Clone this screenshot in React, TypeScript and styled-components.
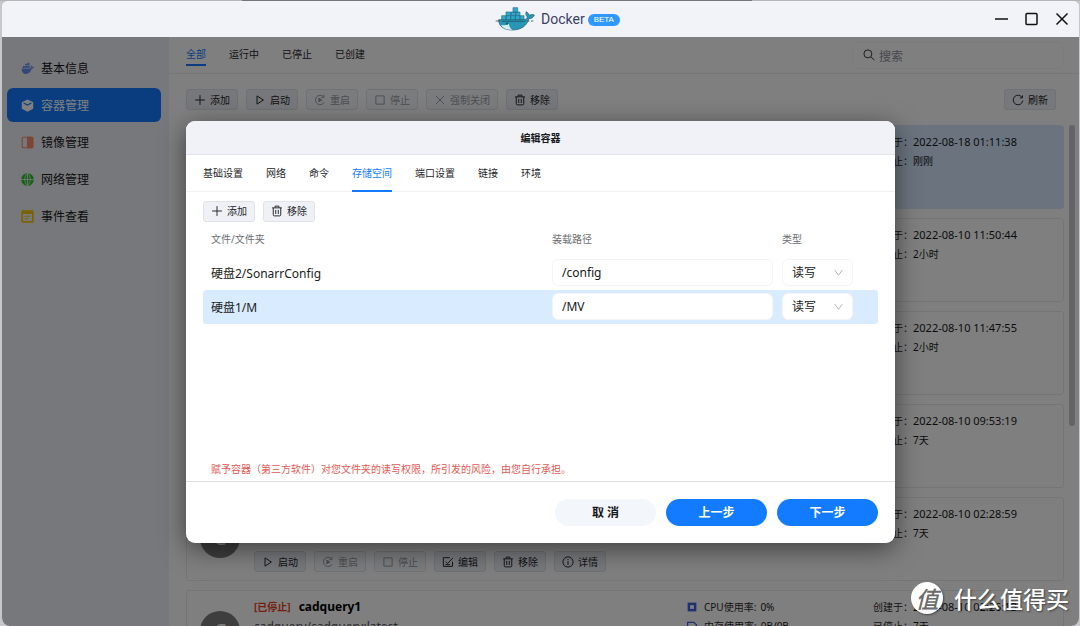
import React from "react";
import styled, { createGlobalStyle, css } from "styled-components";

const GlobalStyle = createGlobalStyle`
  * { box-sizing: border-box; }
  html, body { margin: 0; padding: 0; }
  body {
    background: linear-gradient(90deg, #b4b4b7 0 242px, #77757a 242px 752px, #b4b4b7 752px) top / 100% 1px no-repeat, #c6c7ca;
    font-family: "Noto Sans", "Noto Sans CJK SC", sans-serif;
    font-size: 10px;
    color: #1c1d20;
    overflow: hidden;
  }
  button, input, select { font: inherit; color: inherit; margin: 0; }
  button { cursor: pointer; }
`;

/* ---------- window ---------- */

const Window = styled.div`
  position: relative;
  display: flex;
  flex-direction: column;
  height: calc(100vh - 1px);
  margin: 1px 1px 0 2px;
  border-radius: 6px 6px 8px 8px;
  overflow: hidden;
  background: #fff;
`;

const TitleBar = styled.header`
  display: grid;
  grid-template-columns: 1fr auto 1fr;
  align-items: center;
  flex: none;
  height: 36px;
  background: #f2f3f9;
`;

const Brand = styled.div`
  grid-column: 2;
  display: flex;
  align-items: center;
  margin-left: 34px;
`;

const BrandName = styled.span`
  margin-left: 6px;
  font: 14px/18px Roboto, sans-serif;
  color: #3b3f63;
`;

const Badge = styled.span`
  margin: 2px 0 0 3px;
  padding: 0 6px;
  border-radius: 6px;
  background: #2f98fd;
  color: #fff;
  font: 8px/12px "Liberation Sans", sans-serif;
`;

const WindowControls = styled.div`
  display: flex;
  justify-content: flex-end;
  gap: 14px;
  padding-right: 9px;
`;

const WindowButton = styled.button`
  display: grid;
  place-items: center;
  width: 16px;
  height: 16px;
  padding: 0;
  border: 0;
  background: none;
`;

const Body = styled.div`
  position: relative;
  display: flex;
  flex: 1;
  min-height: 0;
`;

/* ---------- sidebar ---------- */

const Sidebar = styled.nav`
  display: flex;
  flex-direction: column;
  gap: 3px;
  flex: none;
  width: 167px;
  padding: 14px 8px 14px 5px;
  background: #eff1f6;
`;

const NavItem = styled.a<{ $active?: boolean }>`
  display: flex;
  align-items: center;
  gap: 7px;
  height: 34px;
  padding-left: 14px;
  border-radius: 6px;
  font-size: 12px;
  text-decoration: none;
  color: ${(p) => (p.$active ? "#fff" : "#17181b")};
  background: ${(p) => (p.$active ? "#137bff" : "transparent")};
  svg { width: 13px; height: 13px; }
`;

/* ---------- main area ---------- */

const Main = styled.main`
  display: flex;
  flex-direction: column;
  flex: 1;
  min-width: 0;
`;

const FilterBar = styled.div`
  display: flex;
  flex: none;
  height: 37px;
  padding: 0 15px 0 17px;
  border-bottom: 1px solid #eceef1;
`;

const TabList = styled.div<{ $modal?: boolean }>`
  display: flex;
  gap: 23px;
  flex: ${(p) => (p.$modal ? "none" : "1")};
  ${(p) =>
    p.$modal &&
    css`
      height: 37px;
      padding: 0 17px;
      border-bottom: 1px solid #eeeff2;
    `}
`;

const Tab = styled.button<{ $active?: boolean; $modal?: boolean }>`
  height: ${(p) => (p.$modal ? "37px" : "29px")};
  padding: ${(p) => (p.$modal ? "0" : "6px 0 0")};
  border: 0;
  border-bottom: 2px solid ${(p) => (p.$active ? "#137bff" : "transparent")};
  background: none;
  color: ${(p) => (p.$active ? "#137bff" : "#26272b")};
`;

const SearchBox = styled.label`
  display: flex;
  align-items: center;
  gap: 4px;
  align-self: center;
  width: 212px;
  height: 27px;
  padding: 0 10px;
  border: 1px solid #f6f7fa;
  border-radius: 6px;
  color: #33343a;
  svg { width: 12px; height: 12px; flex: none; }
`;

const SearchInput = styled.input`
  flex: 1;
  min-width: 0;
  padding: 2px 0 0;
  border: 0;
  outline: 0;
  background: none;
  font-size: 12px;
  &::placeholder { color: #8e8f9d; opacity: 1; }
`;

const Toolbar = styled.div<{ $main?: boolean }>`
  display: flex;
  gap: 8px;
  flex: none;
  padding: ${(p) => (p.$main ? "15px 23px 15px 17px" : "0")};
  & > :last-child { margin-left: ${(p) => (p.$main ? "auto" : "0")}; }
`;

const ToolButton = styled.button`
  display: inline-flex;
  align-items: center;
  justify-content: center;
  gap: 4px;
  height: 21px;
  padding: 0 7px;
  border: 1px solid #dfe2e8;
  border-radius: 3px;
  background: #eff1f6;
  color: #26272b;
  line-height: 12px;
  white-space: nowrap;
  svg { width: 12px; height: 12px; }
  &:disabled {
    color: #9b9da6;
    background: #f7f8fb;
    border-color: #e2e5eb;
  }
`;

const ListArea = styled.div`
  display: flex;
  flex: 1;
  min-height: 0;
  gap: 5px;
  padding: 0 4px 0 17px;
`;

const CardList = styled.div`
  display: flex;
  flex-direction: column;
  gap: 9px;
  flex: 1;
  min-width: 0;
  overflow: hidden;
`;

const ScrollThumb = styled.div`
  flex: none;
  width: 6px;
  height: 60%;
  border-radius: 3px;
  background: #c6c7ca;
`;

const Card = styled.article<{ $selected?: boolean }>`
  display: grid;
  grid-template-columns: 40px minmax(0, 1fr) 172px 190px;
  column-gap: 14px;
  flex: none;
  height: 84px;
  padding: 6px 0 8px 13px;
  border: 1px solid ${(p) => (p.$selected ? "#d6e8fc" : "#eaebee")};
  border-radius: 3px;
  background: ${(p) => (p.$selected ? "#d6e8fc" : "#fff")};
`;

const Avatar = styled.div`
  align-self: center;
  display: grid;
  place-items: center;
  width: 40px;
  height: 40px;
  border-radius: 50%;
  background: #7d7d7f;
  color: #fff;
  font-size: 20px;
  line-height: 20px;
`;

const CardBody = styled.div`
  display: flex;
  flex-direction: column;
  grid-column: 2;
`;

const CardTitle = styled.h2`
  display: flex;
  gap: 8px;
  margin: 0;
  font-size: 12px;
  line-height: 20px;
  color: #000;
`;

const CardState = styled.span`
  font-size: 10px;
  color: #e8401c;
`;

const CardImage = styled.div`
  font-size: 12px;
  line-height: 20px;
  color: #55565c;
`;

const CardActions = styled.div`
  display: flex;
  gap: 8px;
  margin-top: auto;
`;

const Facts = styled.dl<{ $column: number }>`
  grid-column: ${(p) => p.$column};
  grid-row: 1;
  margin: 0;
`;

const Fact = styled.div`
  display: flex;
  align-items: center;
  height: 19px;
  color: #2b2c30;
  dt { width: 40px; white-space: nowrap; }
  dd { margin: 0; color: #17181b; white-space: nowrap; }
`;

const UsageFact = styled(Fact)`
  dt { display: flex; align-items: center; gap: 7px; width: auto; margin-right: 4px; }
  svg { width: 10px; height: 10px; color: #3a62e0; }
`;

const Stamp = styled.time`
  font-size: 11px;
`;

/* ---------- dialog ---------- */

const Backdrop = styled.div`
  position: absolute;
  inset: 0;
  display: grid;
  place-items: center;
  background: rgba(0, 0, 0, 0.5);
`;

const Dialog = styled.section`
  display: flex;
  flex-direction: column;
  width: 709px;
  max-width: 94%;
  min-height: 422px;
  border-radius: 9px;
  overflow: hidden;
  background: #fff;
  box-shadow: 0 6px 26px rgba(0, 0, 0, 0.5);
`;

const DialogHeader = styled.h1`
  flex: none;
  margin: 0;
  padding-top: 1px;
  border-bottom: 1px solid #e3e4ea;
  background: #f1f2f8;
  text-align: center;
  font-size: 10px;
  line-height: 32px;
  color: #17181b;
`;

const DialogContent = styled.div`
  display: flex;
  flex-direction: column;
  flex: 1;
  padding: 9px 17px 4px;
`;

const MountTable = styled.table`
  width: 100%;
  table-layout: fixed;
  border-collapse: separate;
  border-spacing: 0;
`;

const HeadCell = styled.th<{ $width?: number }>`
  width: ${(p) => (p.$width ? p.$width + "px" : "auto")};
  height: 34px;
  padding: 0;
  text-align: left;
  font-weight: 400;
  color: #6c6d72;
  &:first-child { padding-left: 8px; }
`;

const MountRow = styled.tr<{ $selected?: boolean }>`
  background: ${(p) => (p.$selected ? "#d9ebff" : "transparent")};
`;

const Cell = styled.td`
  height: 34px;
  padding: 0 9px 0 0;
  font-size: 12px;
  &:first-child { padding-left: 8px; border-radius: 3px 0 0 3px; }
  &:last-child { border-radius: 0 3px 3px 0; }
`;

const field = css`
  display: block;
  height: 27px;
  padding: 0 9px;
  border: 1px solid #f3f4f6;
  border-radius: 6px;
  outline: 0;
  background: #fff;
  color: #17181b;
`;

const PathInput = styled.input`
  ${field}
  width: 100%;
`;

const SelectWrap = styled.div`
  position: relative;
  width: 71px;
  svg {
    position: absolute;
    top: 8px;
    right: 9px;
    width: 11px;
    height: 11px;
    color: #a9abb0;
    pointer-events: none;
  }
`;

const ModeSelect = styled.select`
  ${field}
  width: 100%;
  appearance: none;
`;

const Warning = styled.p`
  margin: auto 0 0;
  padding-left: 8px;
  line-height: 16px;
  color: #e25a55;
`;

const DialogFooter = styled.footer`
  display: flex;
  justify-content: flex-end;
  gap: 10px;
  flex: none;
  padding: 17px;
  border-top: 1px solid #dfe0e3;
`;

const PillButton = styled.button<{ $primary?: boolean }>`
  width: 101px;
  height: 27px;
  padding: 0;
  border: 0;
  border-radius: 14px;
  font-size: 12px;
  font-weight: 700;
  color: ${(p) => (p.$primary ? "#fff" : "#17181b")};
  background: ${(p) => (p.$primary ? "#137bff" : "#f3f7fc")};
`;

const Watermark = styled.div`
  position: absolute;
  right: 10px;
  bottom: 11px;
  display: flex;
  align-items: center;
  gap: 11px;
  color: #fff;
  font: 500 23px/34px "Noto Sans CJK SC", sans-serif;
  text-shadow: 1px 1px 2px rgba(0, 0, 0, 0.5);
`;

const WatermarkSeal = styled.span`
  display: grid;
  place-items: center;
  width: 32px;
  height: 32px;
  border-radius: 50%;
  background: #fff;
  color: #6b6b6b;
  line-height: 30px;
  font-style: italic;
  text-shadow: none;
  box-shadow: 1px 1px 2px rgba(0, 0, 0, 0.4);
`;

/* ---------- icons ---------- */

type IconName =
  | "plus" | "play" | "restart" | "stop" | "close" | "trash"
  | "edit" | "info" | "refresh" | "search" | "chevron";

const iconShapes: Record<IconName, React.ReactNode> = {
  plus: <path d="M8 1.5v13M1.5 8h13" />,
  play: <path d="M4 2.5v11L12.5 8z" />,
  restart: (
    <>
      <path d="M12.5 3.600A6.200 6.200 0 1 0 13.600 10.800M13.300 1.200v3.400h-3.400" />
      <path d="M6.500 5.500v5L10.500 8z" fill="currentColor" />
    </>
  ),
  stop: <path d="M2.500 2.500h11v11h-11z" />,
  close: <path d="M2.500 2.500l11 11M13.500 2.500l-11 11" />,
  trash: (
    <path d="M1.500 3.800h13M5.500 3.500V1.500h5v2M3 4v9a1.500 1.500 0 0 0 1.500 1.500h7A1.500 1.500 0 0 0 13 13V4M6.300 6.500v5.500M9.700 6.500v5.500" />
  ),
  edit: <path d="M14 7.500v6.300H1.800V2.200h8.500M5 7.500l2.500 2.500L14.500 2.500M4.500 11.500h6" />,
  info: <path d="M8 1.200a6.800 6.800 0 1 0 0 13.600A6.800 6.800 0 0 0 8 1.200zM8 7v5M8 4v1.500" />,
  refresh: <path d="M13.600 4.800A6.400 6.400 0 1 0 14.400 8.800M13.900 1.800v3.400h-3.400" />,
  search: <path d="M6.500 1.200a5.300 5.300 0 1 0 0 10.600 5.300 5.300 0 0 0 0-10.600zM10.500 10.500l4.700 4.200" />,
  chevron: <path d="M2.500 4.500L8 12l5.500-7.500" />,
};

const Icon = ({ name }: { name: IconName }) => (
  <svg viewBox="0 0 16 16" fill="none" stroke="currentColor" strokeWidth="1.300" aria-hidden="true">
    {iconShapes[name]}
  </svg>
);

const DockerLogo = () => (
  <svg width="40" height="24" viewBox="0 0 120 72" aria-hidden="true">
    <g fill="#2fa9cc" stroke="#276f8b" strokeWidth="2">
      <path d="M54 2h14v14H54zM33 15h15v11H33zM48 15h14v11H48zM62 15h13v11H62z" />
      <path d="M20 26h13v14H20zM33 26h14v14H33zM47 26h14v14H47zM61 26h14v14H61zM75 26h12v14H75z" />
    </g>
    <path
      d="M11 38H84C92 38 97 35 97 30C91 24 92 17 94 14C99 17 102 21 103 25C108 22 114 22 118 24C116 31 110 35 102 35C96 55 80 69 52 69C26 69 11 58 11 38z"
      fill="#2797b5"
      stroke="#235e70"
      strokeWidth="2"
    />
    <path d="M18 54C26 56 35 54 42 51C42 59 46 65 53 68C33 69 23 63 18 54z" fill="#d8eff3" />
    <path d="M2 42h14M20 42c5 4 10-1 15 1s10-1 15 0 10-1 15 0 10-1 15 0 8 0 12-1M98 42h5M108 42h7" fill="none" stroke="#264f5e" strokeWidth="2.400" />
    <circle cx="36" cy="50" r="2.500" fill="#173b46" />
  </svg>
);

const WhaleIcon = () => (
  <svg viewBox="0 0 16 16" fill="#6a8fee" aria-hidden="true">
    <path d="M.8 8H10.600C12 8 12.500 7.300 12.300 6.500 11.700 5.600 11.800 4.700 12.200 4 13 4.500 13.500 5.200 13.600 6 14.500 5.700 15.300 5.800 15.900 6.200 15.500 7.400 14.500 8 13.300 8.100 12.200 12.500 9.300 14.800 6 14.800 2.600 14.800.700 12.300.800 8z" />
    <path d="M2.200 4.800h2.500v2.500H2.200zM5.100 4.800h2.500v2.500H5.100zM8 4.800h2.500v2.500H8zM5.100 2h2.500v2.400H5.100zM8 1h2.500v3.400H8z" />
  </svg>
);

const CubeIcon = () => (
  <svg viewBox="0 0 16 16" fill="#fff" aria-hidden="true">
    <path d="M8 .5L15 4v8l-7 3.600L1 12V4z" />
    <path d="M3.200 5L8 7.500 12.800 5" fill="none" stroke="#137bff" strokeWidth="1.500" />
  </svg>
);

const ImageIcon = () => (
  <svg viewBox="0 0 16 16" fill="none" stroke="#fb8a6a" strokeWidth="1.400" aria-hidden="true">
    <rect x="1.500" y="1.500" width="13" height="13" rx="1.500" />
    <path d="M8 1.500h5.500a1 1 0 0 1 1 1v11a1 1 0 0 1-1 1H8z" fill="#fb8a6a" />
  </svg>
);

const GlobeIcon = () => (
  <svg viewBox="0 0 16 16" fill="none" stroke="#eff1f6" strokeWidth="1" aria-hidden="true">
    <circle cx="8" cy="8" r="7.800" fill="#2fc32f" stroke="none" />
    <path d="M0 8h16M8 0v16M8 .5C3.500 4 3.500 12 8 15.500M8 .5C12.500 4 12.500 12 8 15.500" />
  </svg>
);

const EventIcon = () => (
  <svg viewBox="0 0 16 16" aria-hidden="true">
    <rect x=".3" y=".3" width="15.400" height="15.400" rx="1.500" fill="#f6c40c" />
    <path d="M2.500 5h11v8.500h-11z" fill="#eff1f6" />
    <path d="M4.500 7.700h7M4.500 10.700h4.500" stroke="#f6c40c" strokeWidth="1.400" />
  </svg>
);

const CpuIcon = () => (
  <svg viewBox="0 0 16 16" fill="none" stroke="currentColor" strokeWidth="4" aria-hidden="true">
    <rect x="3" y="3" width="10" height="10" />
  </svg>
);

const MemoryIcon = () => (
  <svg viewBox="0 0 16 16" fill="none" stroke="currentColor" strokeWidth="2" aria-hidden="true">
    <path d="M1 2h10l4 4v8H1z" />
  </svg>
);

/* ---------- data ---------- */

type Container = {
  created: string;
  stopped: string;
  selected?: boolean;
  initial?: string;
  name?: string;
  image?: string;
  actions?: boolean;
};

const containers: Container[] = [
  { created: "2022-08-18 01:11:38", stopped: "刚刚", selected: true },
  { created: "2022-08-10 11:50:44", stopped: "2小时" },
  { created: "2022-08-10 11:47:55", stopped: "2小时" },
  { created: "2022-08-10 09:53:19", stopped: "7天" },
  { created: "2022-08-10 02:28:59", stopped: "7天", initial: "C", actions: true },
  { created: "2022-08-10 02:26:13", stopped: "7天", initial: "C", name: "cadquery1", image: "cadquery/cadquery:latest" },
];

const mounts = [
  { folder: "硬盘2/SonarrConfig", path: "/config" },
  { folder: "硬盘1/M", path: "/MV", selected: true },
];

const navItems = [
  { label: "基本信息", icon: <WhaleIcon /> },
  { label: "容器管理", icon: <CubeIcon />, active: true },
  { label: "镜像管理", icon: <ImageIcon /> },
  { label: "网络管理", icon: <GlobeIcon /> },
  { label: "事件查看", icon: <EventIcon /> },
];

const filters = ["全部", "运行中", "已停止", "已创建"];
const dialogTabs = ["基础设置", "网络", "命令", "存储空间", "端口设置", "链接", "环境"];

const Tool = ({ icon, label, disabled }: { icon: IconName; label: string; disabled?: boolean }) => (
  <ToolButton type="button" disabled={disabled}>
    <Icon name={icon} />
    {label}
  </ToolButton>
);

const ContainerCard = ({ item }: { item: Container }) => (
  <Card $selected={item.selected}>
    {item.initial && <Avatar>{item.initial}</Avatar>}
    <CardBody>
      {item.name && (
        <CardTitle>
          <CardState>[已停止]</CardState>
          {item.name}
        </CardTitle>
      )}
      {item.image && <CardImage>{item.image}</CardImage>}
      {item.actions && (
        <CardActions>
          <Tool icon="play" label="启动" />
          <Tool icon="restart" label="重启" disabled />
          <Tool icon="stop" label="停止" disabled />
          <Tool icon="edit" label="编辑" />
          <Tool icon="trash" label="移除" />
          <Tool icon="info" label="详情" />
        </CardActions>
      )}
    </CardBody>
    {item.name && (
      <Facts $column={3}>
        <UsageFact><dt><CpuIcon />CPU使用率:</dt><dd>0%</dd></UsageFact>
        <UsageFact><dt><MemoryIcon />内存使用率:</dt><dd>0B/0B</dd></UsageFact>
      </Facts>
    )}
    <Facts $column={4}>
      <Fact><dt>创建于：</dt><dd><Stamp>{item.created}</Stamp></dd></Fact>
      <Fact><dt>已停止：</dt><dd>{item.stopped}</dd></Fact>
    </Facts>
  </Card>
);

export default function App() {
  return (
    <>
      <GlobalStyle />
      <Window>
        <TitleBar>
          <Brand>
            <DockerLogo />
            <BrandName>Docker</BrandName>
            <Badge>BETA</Badge>
          </Brand>
          <WindowControls>
            <WindowButton type="button" aria-label="最小化">
              <svg width="16" height="16" stroke="#111" strokeWidth="1.500"><path d="M1 8h13" /></svg>
            </WindowButton>
            <WindowButton type="button" aria-label="最大化">
              <svg width="16" height="16" fill="none" stroke="#111" strokeWidth="1.500"><rect x="2" y="2.500" width="11" height="11" rx="1" /></svg>
            </WindowButton>
            <WindowButton type="button" aria-label="关闭">
              <svg width="16" height="16" stroke="#111" strokeWidth="1.500"><path d="M2.500 2.500l11 11M13.500 2.500l-11 11" /></svg>
            </WindowButton>
          </WindowControls>
        </TitleBar>
        <Body>
          <Sidebar>
            {navItems.map((n) => (
              <NavItem key={n.label} href="#" $active={n.active}>
                {n.icon}
                {n.label}
              </NavItem>
            ))}
          </Sidebar>
          <Main>
            <FilterBar>
              <TabList>
                {filters.map((f, i) => (
                  <Tab key={f} type="button" $active={i === 0}>{f}</Tab>
                ))}
              </TabList>
              <SearchBox>
                <Icon name="search" />
                <SearchInput type="text" placeholder="搜索" aria-label="搜索" />
              </SearchBox>
            </FilterBar>
            <Toolbar $main>
              <Tool icon="plus" label="添加" />
              <Tool icon="play" label="启动" />
              <Tool icon="restart" label="重启" disabled />
              <Tool icon="stop" label="停止" disabled />
              <Tool icon="close" label="强制关闭" disabled />
              <Tool icon="trash" label="移除" />
              <Tool icon="refresh" label="刷新" />
            </Toolbar>
            <ListArea>
              <CardList>
                {containers.map((c) => (
                  <ContainerCard key={c.created} item={c} />
                ))}
              </CardList>
              <ScrollThumb />
            </ListArea>
          </Main>
          <Backdrop>
            <Dialog role="dialog" aria-labelledby="dialog-title">
              <DialogHeader id="dialog-title">编辑容器</DialogHeader>
              <TabList $modal>
                {dialogTabs.map((t) => (
                  <Tab key={t} type="button" $modal $active={t === "存储空间"}>{t}</Tab>
                ))}
              </TabList>
              <DialogContent>
                <Toolbar>
                  <Tool icon="plus" label="添加" />
                  <Tool icon="trash" label="移除" />
                </Toolbar>
                <MountTable>
                  <thead>
                    <tr>
                      <HeadCell>文件/文件夹</HeadCell>
                      <HeadCell $width={230}>装载路径</HeadCell>
                      <HeadCell $width={96}>类型</HeadCell>
                    </tr>
                  </thead>
                  <tbody>
                    {mounts.map((m) => (
                      <MountRow key={m.folder} $selected={m.selected}>
                        <Cell>{m.folder}</Cell>
                        <Cell>
                          <PathInput type="text" defaultValue={m.path} aria-label="装载路径" />
                        </Cell>
                        <Cell>
                          <SelectWrap>
                            <ModeSelect aria-label="类型" defaultValue="读写">
                              <option>读写</option>
                            </ModeSelect>
                            <Icon name="chevron" />
                          </SelectWrap>
                        </Cell>
                      </MountRow>
                    ))}
                  </tbody>
                </MountTable>
                <Warning>赋予容器（第三方软件）对您文件夹的读写权限，所引发的风险，由您自行承担。</Warning>
              </DialogContent>
              <DialogFooter>
                <PillButton type="button">取 消</PillButton>
                <PillButton type="button" $primary>上一步</PillButton>
                <PillButton type="button" $primary>下一步</PillButton>
              </DialogFooter>
            </Dialog>
          </Backdrop>
        </Body>
        <Watermark>
          <WatermarkSeal>值</WatermarkSeal>
          什么值得买
        </Watermark>
      </Window>
    </>
  );
}
